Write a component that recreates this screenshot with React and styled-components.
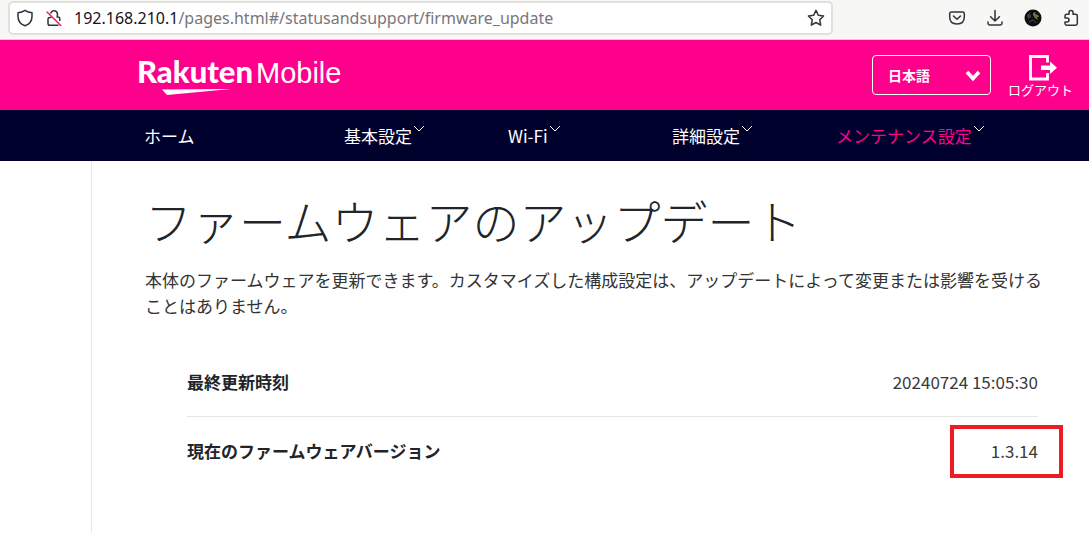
import React, { useState } from "react";
import styled, { createGlobalStyle } from "styled-components";

const menus = [
  { label: "ホーム" },
  { label: "基本設定", sub: true },
  { label: "Wi-Fi", sub: true },
  { label: "詳細設定", sub: true },
  { label: "メンテナンス設定", sub: true, active: true },
];

const firmware = [
  { label: "最終更新時刻", value: "20240724 15:05:30" },
  { label: "現在のファームウェアバージョン", value: "1.3.14", marked: true },
];

function BrowserBar() {
  const [path, setPath] = useState("/pages.html#/statusandsupport/firmware_update");

  return (
    <Toolbar>
      <AddressBar>
        <IconButton aria-label="保護">
          <Icon width="18" height="18" viewBox="0 0 18 18">
            <path d="M9 1.3 Q12 3.2 16 3.8 V7.5 Q16 14.3 9 16.8 Q2 14.3 2 7.5 V3.8 Q6 3.2 9 1.3 Z" />
          </Icon>
        </IconButton>
        <IconButton aria-label="安全でない接続">
          <Icon width="18" height="18" viewBox="0 0 18 18">
            <path d="M5.8 4 A3.4 3.4 0 0 1 12.4 5 V8 M12 8 H13 Q14.8 8 14.8 9.8 V11.5 M6 8.5 H4.8 Q3 8.5 3 10 V14.4 Q3 16.2 4.8 16.2 H13" />
            <path d="M2 3 L15.8 16.5" stroke="#e22850" />
          </Icon>
        </IconButton>
        <Host htmlFor="url">192.168.210.1</Host>
        <UrlInput id="url" value={path} onChange={(e) => setPath(e.target.value)} />
        <IconButton aria-label="ブックマーク">
          <Icon width="18" height="18" viewBox="0 0 18 18">
            <path d="M9 1.4 L11.3 6.3 L16.6 7 L12.7 10.7 L13.7 16.2 L9 13.5 L4.3 16.2 L5.3 10.7 L1.4 7 L6.7 6.3 Z" />
          </Icon>
        </IconButton>
      </AddressBar>
      <ToolButtons>
        <IconButton aria-label="Pocket">
          <Icon width="18" height="18" viewBox="0 0 18 18">
            <path d="M3.5 3 H14.5 Q16.3 3 16.3 4.8 V8 Q16.3 15 9 15 Q1.7 15 1.7 8 V4.8 Q1.7 3 3.5 3 Z M5.5 7 L9 10.2 L12.5 7" />
          </Icon>
        </IconButton>
        <IconButton aria-label="ダウンロード">
          <Icon width="18" height="18" viewBox="0 0 18 18">
            <path d="M9 1.5 V12 M4.6 7.8 L9 12 L13.4 7.8 M2 13 V14.3 Q2 16 3.7 16 H14.3 Q16 16 16 14.3 V13" />
          </Icon>
        </IconButton>
        <IconButton aria-label="アカウント">
          <svg width="18" height="18" viewBox="0 0 18 18">
            <circle cx="9" cy="9" r="8.5" fill="#0d0e10" />
            <path d="M3 6 L6 4 L7 8 L4 10 Z" fill="#39424a" />
            <path d="M9 4 L12 3 L11 5 L14 6 L15 8 L13 8 L14 11 L11 9 L9 6 Z" fill="#77743a" />
            <path d="M5 13 L9 11 L12 14" stroke="#4a4f50" fill="none" />
          </svg>
        </IconButton>
        <IconButton aria-label="拡張機能">
          <Icon width="18" height="18" viewBox="0 0 18 18">
            <path d="M3 9 V7 Q3 5.3 4.7 5.3 H7 V3.5 A2 2 0 0 1 11 3.5 V5.3 H13.5 Q15.3 5.3 15.3 7 V14.6 Q15.3 16.3 13.6 16.3 H4.7 Q3 16.3 3 14.6 V13 H5 A2 2 0 0 0 5 9 Z" />
          </Icon>
        </IconButton>
      </ToolButtons>
    </Toolbar>
  );
}

function Header() {
  const [language, setLanguage] = useState("ja");

  return (
    <HeaderBar>
      <LogoLink href="#/" aria-label="Rakuten Mobile">
        <LogoText>
          <LogoName>Rakuten</LogoName>
          <LogoSub>Mobile</LogoSub>
        </LogoText>
        <Swoosh width="70" height="7" viewBox="0 0 70 7">
          <polygon points="0,0.5 69,0 5,6" fill="#fff" />
        </Swoosh>
      </LogoLink>
      <HeaderRight>
        <LanguageBox>
          <LanguageSelect
            aria-label="言語"
            value={language}
            onChange={(e) => setLanguage(e.target.value)}
          >
            <option value="ja">日本語</option>
            <option value="en">English</option>
          </LanguageSelect>
          <SelectArrow width="16" height="12" viewBox="0 0 16 12">
            <path d="M2 2 L8 8.5 L14 2" fill="none" stroke="#fff" strokeWidth="3.6" />
          </SelectArrow>
        </LanguageBox>
        <LogoutButton>
          <svg width="34" height="26" viewBox="-6 0 34 26">
            <path d="M18.5 7.5 V1.5 H1.5 V24 H18.5 V18" fill="none" stroke="#fff" strokeWidth="2.8" />
            <path d="M12 10.5 H21 V6.5 L28 12.7 L21 19 V15 H12 Z" fill="#fff" />
          </svg>
          ログアウト
        </LogoutButton>
      </HeaderRight>
    </HeaderBar>
  );
}

function App() {
  return (
    <>
      <GlobalStyle />
      <Page>
        <BrowserBar />
        <Header />
        <Nav>
          {menus.map((menu) => (
            <NavLink key={menu.label} href="#/" $active={menu.active}>
              {menu.label}
              {menu.sub && (
                <svg width="12" height="8" viewBox="0 0 12 8">
                  <path d="M1 1 L6 6 L11 1" fill="none" stroke="#fff" />
                </svg>
              )}
            </NavLink>
          ))}
        </Nav>
        <Body>
          <Content>
            <Title>ファームウェアのアップデート</Title>
            <Description>
              本体のファームウェアを更新できます。カスタマイズした構成設定は、アップデートによって変更または影響を受けることはありません。
            </Description>
            <InfoTable>
              <tbody>
                {firmware.map((row) => (
                  <InfoRow key={row.label}>
                    <InfoLabel scope="row">{row.label}</InfoLabel>
                    <InfoValue>
                      {row.marked ? <Marked>{row.value}</Marked> : row.value}
                    </InfoValue>
                  </InfoRow>
                ))}
              </tbody>
            </InfoTable>
          </Content>
        </Body>
      </Page>
    </>
  );
}

export default App;

const GlobalStyle = createGlobalStyle`
  * {
    box-sizing: border-box;
  }
  body {
    margin: 0;
    background-color: white;
    color: #212529;
    font-family: "Noto Sans CJK JP", sans-serif;
    font-size: 17px;
  }
  button, input, select {
    font-family: inherit;
  }
`;

const Page = styled.div`
  display: flex;
  flex-direction: column;
  min-height: 100vh;
`;

const Toolbar = styled.div`
  display: flex;
  align-items: flex-start;
  justify-content: space-between;
  height: 40px;
  padding: 1px 9px 1px 8px;
  background-color: #f7f7f6;
  border-bottom: 1px solid #d8d0d4;
`;

const AddressBar = styled.div`
  display: flex;
  align-items: center;
  width: 77%;
  height: 34px;
  padding: 0 6px;
  gap: 11px;
  border: 2px solid #e1e0dd;
  border-radius: 5px;
  background-color: white;
`;

const IconButton = styled.button`
  display: flex;
  padding: 0;
  border: none;
  background-color: transparent;
  cursor: pointer;
`;

const Icon = styled.svg`
  fill: none;
  stroke: #2e3438;
  stroke-width: 1.5;
  stroke-linejoin: round;
  stroke-linecap: round;
`;

const Host = styled.label`
  font-family: "Noto Sans", sans-serif;
  font-size: 16px;
  color: #15141a;
`;

const UrlInput = styled.input`
  flex: 1;
  min-width: 0;
  margin-left: -11px;
  padding: 0;
  border: none;
  outline: none;
  background-color: transparent;
  font-family: "Noto Sans", sans-serif;
  font-size: 16px;
  color: #77767b;
`;

const ToolButtons = styled.div`
  display: flex;
  align-items: center;
  height: 34px;
  gap: 20px;
`;

const HeaderBar = styled.header`
  display: flex;
  align-items: center;
  justify-content: space-between;
  height: 70px;
  padding: 0 16px 0 137px;
  background-color: #ff008c;
`;

const LogoLink = styled.a`
  display: flex;
  flex-direction: column;
  color: white;
  text-decoration: none;
`;

const LogoText = styled.span`
  display: flex;
  align-items: baseline;
  gap: 3px;
  line-height: 32px;
`;

const LogoName = styled.span`
  font-family: Lato, sans-serif;
  font-size: 31px;
  font-weight: 900;
`;

const LogoSub = styled.span`
  font-family: "Liberation Sans", sans-serif;
  font-size: 29px;
`;

const Swoosh = styled.svg`
  margin-left: 25px;
`;

const HeaderRight = styled.div`
  display: flex;
  align-items: center;
  gap: 17px;
`;

const LanguageBox = styled.div`
  position: relative;
  width: 119px;
`;

const LanguageSelect = styled.select`
  width: 100%;
  height: 40px;
  padding: 0 15px;
  border: 1px solid white;
  border-radius: 4px;
  appearance: none;
  background-color: transparent;
  color: white;
  font-size: 14px;
  font-weight: bold;
`;

const SelectArrow = styled.svg`
  position: absolute;
  top: 15px;
  right: 10px;
  pointer-events: none;
`;

const LogoutButton = styled.button`
  display: flex;
  flex-direction: column;
  align-items: center;
  padding: 4px 0 0;
  border: none;
  background-color: transparent;
  color: white;
  font-size: 13px;
  line-height: 18px;
  cursor: pointer;
`;

const Nav = styled.nav`
  display: grid;
  grid-template-columns: 200fr repeat(4, 164fr);
  align-items: center;
  height: 51px;
  padding: 0 89px 0 144px;
  background-color: #00002d;
`;

const NavLink = styled.a`
  display: flex;
  gap: 1px;
  color: ${({ $active }) => ($active ? "#ff008c" : "white")};
  font-size: 17px;
  line-height: 24px;
  text-decoration: none;
  white-space: nowrap;
  svg {
    margin-top: 1px;
  }
`;

const Body = styled.div`
  display: flex;
  flex: 1;
  padding-left: 91px;
`;

const Content = styled.main`
  flex: 1;
  padding: 27px 40px 0 53px;
  border-left: 1px solid #e9e9ec;
`;

const Title = styled.h1`
  margin: 0;
  font-size: 47px;
  font-weight: 300;
  line-height: 64px;
`;

const Description = styled.p`
  margin: 15px 0 0;
  color: #333333;
  line-height: 26px;
`;

const InfoTable = styled.table`
  width: calc(100% - 53px);
  margin: 29px 11px 0 42px;
  border-collapse: collapse;
`;

const InfoRow = styled.tr`
  height: 68px;
  &:not(:last-child) {
    border-bottom: 1px solid #e5e5e8;
  }
`;

const InfoLabel = styled.th`
  padding: 0;
  text-align: left;
  font-weight: bold;
`;

const InfoValue = styled.td`
  padding: 0;
  color: #3a3a3a;
  text-align: right;
`;

const Marked = styled.span`
  position: relative;
  &::after {
    content: "";
    position: absolute;
    inset: -13px -25px -15px -41px;
    border: 4px solid #ed1c24;
  }
`;
